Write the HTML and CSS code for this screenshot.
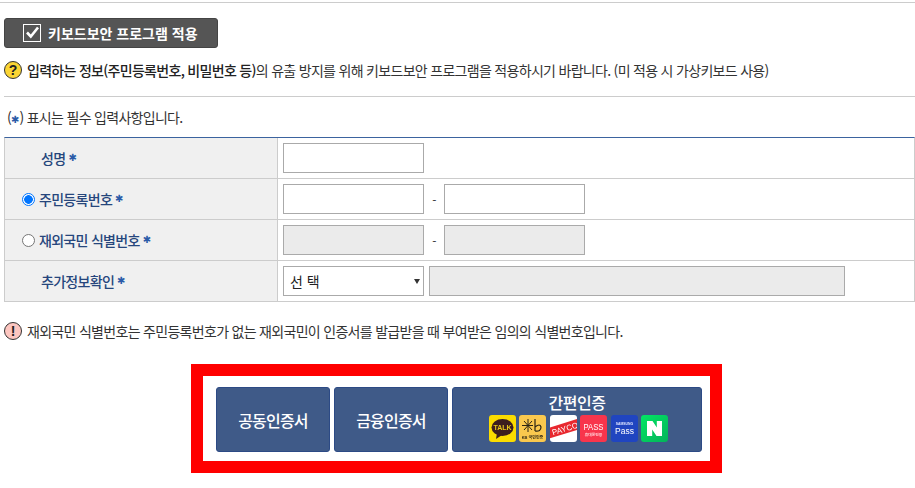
FILE: index.html
```html
<!DOCTYPE html>
<html lang="ko">
<head>
  <meta charset="UTF-8">
  <title>본인확인</title>
  <link rel="stylesheet" href="styles.css">
</head>
<body>

  <!-- ===== Keyboard security ===== -->
  <section class="security">
    <button class="security-btn" type="button">
      <svg class="check-icon" width="18" height="18" viewBox="0 0 18 18">
        <rect x="0.5" y="0.5" width="17" height="17" fill="none" stroke="#fff"/>
        <path d="M4 8.5 L7.8 12.5 L15 3.5" fill="none" stroke="#fff" stroke-width="2.6"/>
      </svg>
      키보드보안 프로그램 적용
    </button>
    <p class="notice">
      <span class="badge badge-help">?</span>
      <span><b>입력하는 정보(주민등록번호, 비밀번호 등)</b>의 유출 방지를 위해 키보드보안 프로그램을 적용하시기 바랍니다. (미 적용 시 가상키보드 사용)</span>
    </p>
  </section>

  <!-- ===== Form ===== -->
  <p class="required-note">(<span class="star">✱</span>) 표시는 필수 입력사항입니다.</p>

  <div class="form-table">
    <div class="row">
      <div class="label label-plain">성명<span class="star">✱</span></div>
      <div class="field"><input class="box" type="text"></div>
    </div>
    <div class="row">
      <label class="label"><span class="radio radio-on"></span>주민등록번호<span class="star">✱</span></label>
      <div class="field">
        <input class="box" type="text">
        <span class="dash">-</span>
        <input class="box" type="text">
      </div>
    </div>
    <div class="row">
      <label class="label"><span class="radio"></span>재외국민 식별번호<span class="star">✱</span></label>
      <div class="field">
        <input class="box box-off" type="text" disabled>
        <span class="dash">-</span>
        <input class="box box-off" type="text" disabled>
      </div>
    </div>
    <div class="row">
      <div class="label label-plain">추가정보확인<span class="star">✱</span></div>
      <div class="field">
        <div class="box select">선 택<span class="arrow"></span></div>
        <input class="box box-off box-wide" type="text" disabled>
      </div>
    </div>
  </div>

  <p class="notice notice-warn">
    <span class="badge badge-warn">!</span>
    <span>재외국민 식별번호는 주민등록번호가 없는 재외국민이 인증서를 발급받을 때 부여받은 임의의 식별번호입니다.</span>
  </p>

  <!-- ===== Certificate buttons ===== -->
  <div class="cert-frame">
    <button class="cert-btn cert-small" type="button">공동인증서</button>
    <button class="cert-btn cert-small" type="button">금융인증서</button>
    <button class="cert-btn cert-wide" type="button">
      <span class="cert-title">간편인증</span>
      <span class="apps">
        <span class="app app-kakao">
          <svg width="27" height="27" viewBox="0 0 27 27">
            <ellipse cx="13.5" cy="12.5" rx="11" ry="8.5" fill="#3c1e1e"/>
            <path d="M8 18 L7 24 L13 20 Z" fill="#3c1e1e"/>
            <text x="13.5" y="15" text-anchor="middle" class="app-text" font-size="7" fill="#e8c81a">TALK</text>
          </svg>
        </span>
        <span class="app app-kb">
          <svg width="27" height="27" viewBox="0 0 27 27">
            <path d="M9 4 L9 17 M3 10.5 L14 10.5 M5 6 L13 15 M13 6 L5 15" stroke="#2b2414" stroke-width="1"/>
            <path d="M16 4 L16 16 M16 12 Q21 8 22 12 Q22 17 16 16" fill="none" stroke="#2b2414" stroke-width="1.2"/>
            <text x="13.5" y="23.5" text-anchor="middle" class="app-text" font-size="4" fill="#3a3018">KB 국민인증</text>
          </svg>
        </span>
        <span class="app app-payco">
          <svg width="27" height="27" viewBox="0 0 27 27">
            <g transform="rotate(-17 13.5 14)">
              <rect x="-3" y="8.5" width="34" height="10.5" fill="#e8282f"/>
              <text x="15" y="17" text-anchor="middle" class="app-text app-thin" font-size="8" fill="#fff">PAYCO</text>
            </g>
          </svg>
        </span>
        <span class="app app-pass">
          <svg width="27" height="27" viewBox="0 0 27 27">
            <text x="13.5" y="14.5" text-anchor="middle" class="app-text app-thin" font-size="9" fill="#fff" textLength="20" lengthAdjust="spacingAndGlyphs">PASS</text>
            <text x="13.5" y="21" text-anchor="middle" class="app-text" font-size="3.8" fill="#ffd5da">휴대폰인증</text>
          </svg>
        </span>
        <span class="app app-samsung">
          <svg width="27" height="27" viewBox="0 0 27 27">
            <text x="13.5" y="10" text-anchor="middle" class="app-text" font-size="3.4" fill="#dfe6ff">SAMSUNG</text>
            <text x="13.5" y="18.5" text-anchor="middle" class="app-text app-thin" font-size="8.5" fill="#fff">Pass</text>
          </svg>
        </span>
        <span class="app app-naver">
          <svg width="27" height="27" viewBox="0 0 27 27">
            <path d="M6 6 L11.5 6 L15.8 12.5 L15.8 6 L21 6 L21 21 L15.5 21 L11.2 14.5 L11.2 21 L6 21 Z" fill="#fff"/>
          </svg>
        </span>
      </span>
    </button>
  </div>

</body>
</html>
```

FILE: styles.css
```css
/* ===== Basic ===== */
body {
  margin: 0;
  padding: 2px 1px 0 4px;
  font-family: "Noto Sans CJK KR", sans-serif;
  font-size: 14px;
  letter-spacing: -0.7px;
  color: #333;
  background: #fff;
}
p {
  margin: 0;
}

/* ===== Keyboard security ===== */
.security {
  margin: 0 -1px 0 -4px;
  padding: 15px 0 0 4px;
  border-top: 1px solid #ccc;
}
.security::after {
  content: "";
  display: block;
  margin-top: 16px;
  border-bottom: 1px solid #ccc;
}
.security-btn {
  display: flex;
  align-items: center;
  gap: 7px;
  width: 214px;
  height: 30px;
  padding: 0 0 0 18px;
  border: 1px solid #444;
  border-radius: 3px;
  background: #555;
  color: #fff;
  font-family: inherit;
  font-size: 14px;
  font-weight: 700;
  letter-spacing: 0;
}
.check-icon {
  flex: none;
}
.notice {
  display: flex;
  align-items: center;
  gap: 5px;
  height: 20px;
  margin-top: 12px;
}
.notice b {
  font-weight: 500;
  color: #222;
}
.badge {
  flex: none;
  display: flex;
  align-items: center;
  justify-content: center;
  box-sizing: border-box;
  width: 18px;
  height: 18px;
  border: 1px solid #333;
  border-radius: 50%;
  font-family: "Liberation Sans", sans-serif;
  font-size: 14px;
  font-weight: 700;
  letter-spacing: 0;
  color: #222;
}
.badge-help {
  background: #fbd533;
}
.badge-warn {
  background: #fdc6c0;
}

/* ===== Form ===== */
.required-note {
  margin: 10px 0 0 3px;
  height: 30px;
  line-height: 20px;
}
.star {
  margin-left: 3px;
  color: #2b5ba8;
  font-family: "DejaVu Sans", sans-serif;
  font-size: 10px;
  letter-spacing: 0;
  line-height: 10px;
}
.required-note .star {
  margin-left: 0;
}
.form-table {
  width: 909px;
  border-top: 1px solid #3b639f;
  border-left: 1px solid #ccc;
  border-right: 1px solid #ccc;
}
.row {
  display: flex;
  height: 40px;
  border-bottom: 1px solid #ccc;
}
.label {
  display: flex;
  align-items: center;
  box-sizing: border-box;
  width: 273px;
  padding-left: 17px;
  border-right: 1px solid #ccc;
  background: #f0f0f0;
  color: #26467c;
  font-size: 14px;
  font-weight: 500;
}
.label-plain {
  padding-left: 36px;
}
.radio {
  flex: none;
  width: 11px;
  height: 11px;
  margin-right: 4px;
  border: 1px solid #767676;
  border-radius: 50%;
  background: #fff;
}
.radio-on {
  border-color: #0075ff;
  background: radial-gradient(circle, #0075ff 0 4px, #fff 4.6px);
}
.field {
  display: flex;
  align-items: center;
  padding-left: 5px;
}
.box {
  box-sizing: border-box;
  width: 141px;
  height: 30px;
  margin: 0;
  padding: 0 6px;
  border: 1px solid #aaa;
  background: #fff;
  font-family: inherit;
  font-size: 13px;
}
.box-off {
  background: #ebebeb;
}
.box-wide {
  width: 416px;
  margin-left: 5px;
}
.dash {
  width: 20px;
  text-align: center;
  font-size: 12px;
}
.select {
  display: flex;
  align-items: center;
  justify-content: space-between;
  color: #222;
  font-size: 14px;
  letter-spacing: 0;
}
.arrow {
  width: 0;
  height: 0;
  margin-right: -3px;
  border-left: 3px solid transparent;
  border-right: 3px solid transparent;
  border-top: 5px solid #333;
}
.notice-warn {
  margin-top: 19px;
}

/* ===== Certificate buttons ===== */
.cert-frame {
  display: flex;
  gap: 4px;
  box-sizing: border-box;
  width: 531px;
  height: 109px;
  margin: 23px 0 0 187px;
  padding: 11px 0 0 13px;
  border: 12px solid #f00;
}
.cert-btn {
  box-sizing: border-box;
  height: 65px;
  padding: 0;
  border: 1px solid #2c4a85;
  border-radius: 3px;
  background: #3f5a88;
  color: #fff;
  font-family: inherit;
  font-size: 16px;
  font-weight: 500;
  letter-spacing: -0.8px;
}
.cert-small {
  width: 114px;
}
.cert-wide {
  display: flex;
  flex-direction: column;
  align-items: center;
  width: 250px;
}
.cert-title {
  margin-top: 4px;
  line-height: 20px;
  letter-spacing: -0.5px;
}
.apps {
  display: flex;
  gap: 3.4px;
  margin: 3px 0 0 3px;
}
.app {
  display: block;
  width: 27px;
  height: 27px;
  border-radius: 3px;
  overflow: hidden;
  filter: blur(0.3px);
}
.app svg {
  display: block;
}
.app-text {
  font-family: "Liberation Sans", "Noto Sans CJK KR", sans-serif;
  font-weight: 700;
  letter-spacing: 0;
}
.app-thin {
  font-weight: 400;
}
.app-kakao { background: #fbdc00; }
.app-kb { background: #fac84e; }
.app-payco { background: #fff; }
.app-pass { background: #f8354c; }
.app-samsung { background: #2045c0; }
.app-naver { background: linear-gradient(135deg, #03e664, #03b35a); }
```
